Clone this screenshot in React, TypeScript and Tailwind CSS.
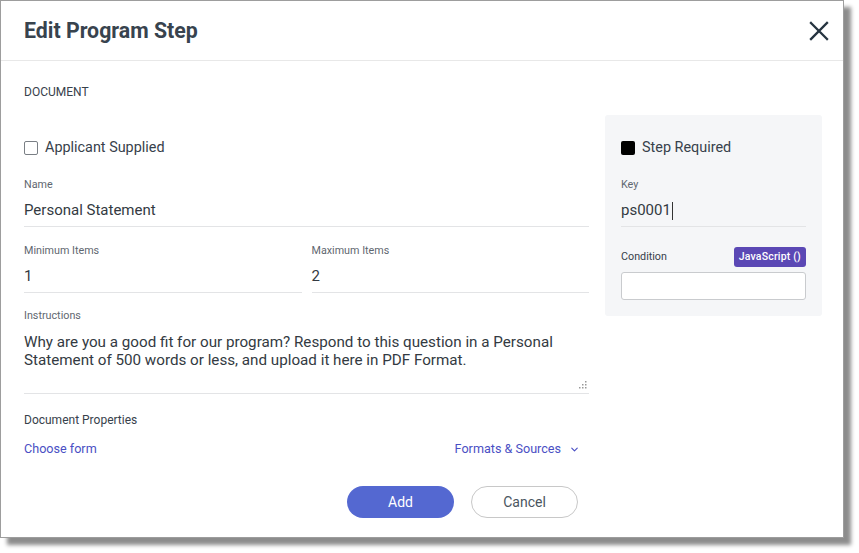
import React from 'react'
import { ChevronDown } from 'lucide-react'

const font = { fontFamily: 'Roboto, "Liberation Sans", sans-serif' }

function UnderlineField({ label, value, caret }: { label: string; value: string; caret?: boolean }) {
    return (
        <div className="flex flex-col">
            <span className="text-[10.75px] leading-[14px] text-[#5f6770]">{label}</span>
            <div className="h-[35px] pt-[3px] flex items-center border-b border-[#e3e4e6] text-[15px] text-[#333a42]">
                {value}
                {caret && <span className="inline-block w-px h-[18px] bg-[#333] ml-[1px]" />}
            </div>
        </div>
    )
}

export default function App() {
    return (
        <div className="w-[859px] h-[553px] bg-white relative overflow-hidden" style={font}>
            <div className="w-[844px] h-[538px] bg-white border border-[#9d9d9d] shadow-[7px_7px_4px_rgba(0,0,0,0.45)] flex flex-col">
                <header className="h-[60px] shrink-0 flex items-center justify-between pl-[23px] pr-[14px] border-b border-[#e8e8e8]">
                    <h1 className="text-[21.3px] font-bold text-[#38434e]">Edit Program Step</h1>
                    <svg width="20" height="20" viewBox="0 0 20 20" className="mt-[1px]">
                        <path d="M2 2 L18 18 M18 2 L2 18" stroke="#263440" strokeWidth="2.3" strokeLinecap="square" fill="none" />
                    </svg>
                </header>

                <div className="pl-[23px] pr-[21px]">
                    <p className="mt-[24px] text-[12px] leading-[14px] text-[#37414b]">DOCUMENT</p>

                    <div className="mt-[16px] flex items-start gap-[16px]">
                        <div className="flex-1 flex flex-col pt-[23px]">
                            <label className="h-5 flex items-center gap-[7px] text-[14.4px] text-[#37414b]">
                                <span className="w-[14px] h-[14px] border border-[#7a7f85] rounded-[2px] bg-white" />
                                Applicant Supplied
                            </label>

                            <div className="mt-[20px]">
                                <UnderlineField label="Name" value="Personal Statement" />
                            </div>

                            <div className="mt-[17px] grid grid-cols-2 gap-[10px]">
                                <UnderlineField label="Minimum Items" value="1" />
                                <UnderlineField label="Maximum Items" value="2" />
                            </div>

                            <div className="mt-[16px] flex flex-col">
                                <span className="text-[10.75px] leading-[14px] text-[#5f6770]">Instructions</span>
                                <div className="relative h-[71px] border-b border-[#e3e4e6] pt-[11px] pr-[28px] text-[15.2px] leading-[17.5px] text-[#333a42]">
                                    Why are you a good fit for our program? Respond to this question in a Personal Statement of 500 words or less, and upload it here in PDF Format.
                                    <svg width="8" height="8" viewBox="0 0 8 8" className="absolute right-[2px] bottom-[4px]">
                                        <rect x="6" y="0" width="1.5" height="1.5" fill="#999" />
                                        <rect x="3" y="3" width="1.5" height="1.5" fill="#999" />
                                        <rect x="6" y="3" width="1.5" height="1.5" fill="#999" />
                                        <rect x="0" y="6" width="1.5" height="1.5" fill="#999" />
                                        <rect x="3" y="6" width="1.5" height="1.5" fill="#999" />
                                        <rect x="6" y="6" width="1.5" height="1.5" fill="#999" />
                                    </svg>
                                </div>
                            </div>

                            <p className="mt-[19px] text-[12px] leading-[14px] text-[#37414b]">Document Properties</p>

                            <div className="mt-[14px] flex items-center justify-between pr-[9px] text-[12.6px] leading-[16px] text-[#4a4fc4]">
                                <span>Choose form</span>
                                <span className="flex items-center gap-[8px]">
                                    Formats &amp; Sources
                                    <ChevronDown size={11} strokeWidth={2.5} />
                                </span>
                            </div>

                            <div className="mt-[29px] flex justify-end gap-[17px] pr-[11px]">
                                <button className="w-[107px] h-[32px] rounded-full bg-[#5468d1] text-white text-[14px]">Add</button>
                                <button className="w-[107px] h-[32px] rounded-full border border-[#c8c8c8] bg-white text-[#4a5560] text-[14px]">Cancel</button>
                            </div>
                        </div>

                        <div className="w-[217px] shrink-0 bg-[#f5f6f8] rounded-[3px] px-[16px] pt-[23px] pb-[16px] flex flex-col">
                            <label className="h-5 flex items-center gap-[7px] text-[14.4px] text-[#37414b]">
                                <span className="w-[14px] h-[14px] rounded-[2px] bg-black" />
                                Step Required
                            </label>

                            <div className="mt-[20px]">
                                <UnderlineField label="Key" value="ps0001" caret />
                            </div>

                            <div className="mt-[20px] flex items-center justify-between">
                                <span className="text-[10.75px] leading-[14px] text-[#37414b]">Condition</span>
                                <span className="h-[20px] px-[5px] flex items-center rounded-[3px] bg-[#5b48b5] text-white text-[10.5px] font-medium tracking-[0.2px]">JavaScript ()</span>
                            </div>
                            <div className="mt-[5px] h-[28px] bg-white border border-[#c9cbce] rounded-[3px]" />
                        </div>
                    </div>
                </div>
            </div>
        </div>
    )
}
